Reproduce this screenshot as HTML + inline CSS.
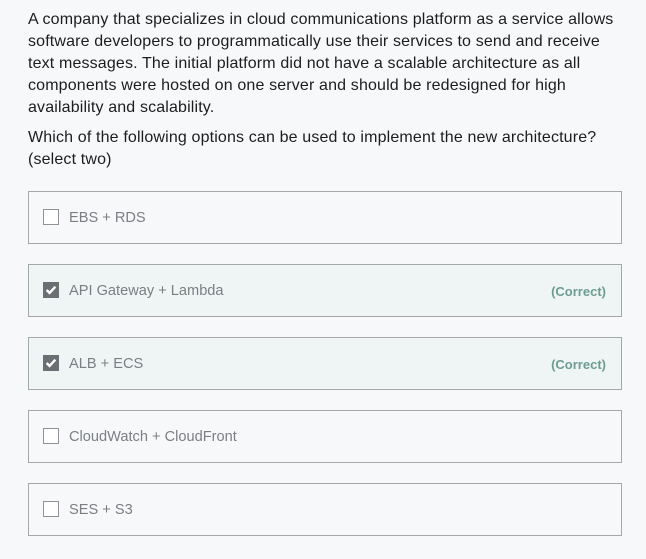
<!DOCTYPE html><html><head><style>
body{margin:0;background:#f7f8fa;font-family:"Liberation Sans",sans-serif;width:646px;height:559px;overflow:hidden}
.p{position:absolute;left:28px;width:590px;font-size:16px;letter-spacing:0.15px;line-height:22px;color:#1c1d1f}
.o{position:absolute;left:28px;width:592px;height:51px;border:1px solid #a5a8ab;background:#f7f8fa;font-size:14.6px;color:#7b7e82}
.o.c{background:#eff5f4}
.cb{position:absolute;left:14px;top:17px;width:16px;height:16px;border:1px solid #8f9296;background:#fff;box-sizing:border-box}
.c .cb{background:#6a6f73;border-color:#6a6f73}
.cb svg{position:absolute;left:1px;top:1px}
.t{position:absolute;left:40px;top:18px}
.r{position:absolute;right:15px;top:19px;font-size:13px;font-weight:bold;color:#6c9d91}
</style></head><body>
<div class="p" style="top:9px">A company that specializes in cloud communications platform as a service allows software developers to programmatically use their services to send and receive text messages. The initial platform did not have a scalable architecture as all components were hosted on one server and should be redesigned for high availability and scalability.</div>
<div class="p" style="top:127px">Which of the following options can be used to implement the new architecture? (select two)</div>
<div class="o" style="top:191px"><div class="cb"></div><div class="t">EBS + RDS</div></div>
<div class="o c" style="top:264px"><div class="cb"><svg width="12" height="12" viewBox="0 0 11 11"><path d="M1.5 5.5l2.7 2.7L9.5 2.5" stroke="#fff" stroke-width="2.2" fill="none"/></svg></div><div class="t">API Gateway + Lambda</div><div class="r">(Correct)</div></div>
<div class="o c" style="top:337px"><div class="cb"><svg width="12" height="12" viewBox="0 0 11 11"><path d="M1.5 5.5l2.7 2.7L9.5 2.5" stroke="#fff" stroke-width="2.2" fill="none"/></svg></div><div class="t">ALB + ECS</div><div class="r">(Correct)</div></div>
<div class="o" style="top:410px"><div class="cb"></div><div class="t">CloudWatch + CloudFront</div></div>
<div class="o" style="top:483px"><div class="cb"></div><div class="t">SES + S3</div></div>
</body></html>
